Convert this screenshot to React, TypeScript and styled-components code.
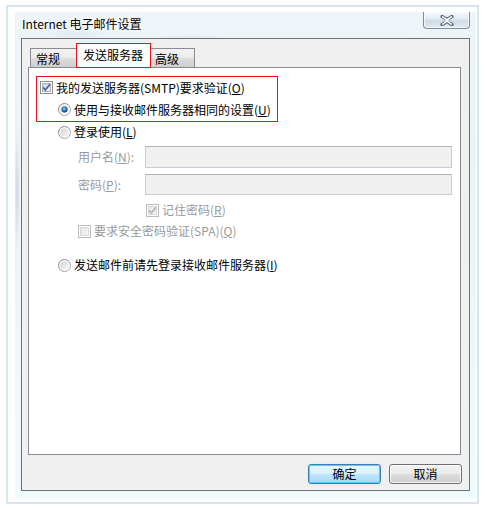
import React from "react";
import styled, { createGlobalStyle } from "styled-components";

const Global = createGlobalStyle`
  html, body { margin: 0; padding: 0; background: #ffffff; }
  body { font-family: "Noto Sans CJK SC", "Noto Sans", sans-serif; font-size: 12px; color: #000; }
  * { box-sizing: border-box; }
`;

const Frame = styled.div`
  margin: 5px 0 0 6px;
  width: 473px;
  height: 499px;
  border: 2px solid #d7e5ef;
  background: #fdfefe;
  padding: 5px 1px 4px 7px;
  display: flex;
`;

const Win = styled.div`
  width: 461px;
  height: 486px;
  display: flex;
  flex-direction: column;
  padding: 0 6px 7px 6px;
  background:
    radial-gradient(ellipse 60px 10px at 175px 32px, rgba(150,165,175,0.35), transparent),
    radial-gradient(ellipse 50px 10px at 400px 34px, rgba(120,135,150,0.35), transparent),
    radial-gradient(ellipse 40px 8px at 60px 22px, rgba(200,215,225,0.35), transparent),
    radial-gradient(ellipse 3px 60px at 2px 180px, rgba(130,145,160,0.3), transparent),
    linear-gradient(180deg, #eef5f9 0%, #e9f4f8 30%, #eefafc 100%);
`;

const TitleBar = styled.div`
  height: 26px;
  display: flex;
  justify-content: space-between;
  align-items: flex-start;
`;

const Title = styled.div`
  padding: 5px 0 0 1px;
  font-size: 12px;
  line-height: 14px;
  color: #000;
  text-shadow: 0 0 6px #ffffff, 0 0 3px #ffffff;
`;

const CloseBtn = styled.div`
  width: 47px;
  height: 17px;
  border: 1px solid #7d8c99;
  border-top: none;
  border-radius: 0 0 4px 4px;
  background: linear-gradient(180deg, #f4f8fb 0%, #e3ecf3 45%, #cfdce6 50%, #dfe9f0 100%);
  box-shadow: inset 0 0 0 1px rgba(255,255,255,0.7);
  display: flex;
  align-items: center;
  justify-content: center;
`;

const Client = styled.div`
  flex: 1;
  border: 1px solid #6f7378;
  background: #f0f0f0;
  display: flex;
  flex-direction: column;
  padding: 4px 8px 6px 6px;
`;

const TabStrip = styled.div`
  height: 24px;
  display: flex;
  align-items: flex-end;
  padding-left: 2px;
`;

const Tab = styled.div<{ $w: number; $active?: boolean; $pl: number; $noLeft?: boolean; $noRight?: boolean }>`
  width: ${(p) => p.$w}px;
  height: ${(p) => (p.$active ? 25 : 19)}px;
  margin-bottom: ${(p) => (p.$active ? -1 : 0)}px;
  position: relative;
  z-index: ${(p) => (p.$active ? 2 : 1)};
  padding-left: ${(p) => p.$pl}px;
  display: flex;
  align-items: center;
  font-size: 12px;
  line-height: 14px;
  border: 1px solid ${(p) => (p.$active ? "#e8141b" : "#898c95")};
  border-bottom: ${(p) => (p.$active ? "1px solid #e8141b" : "none")};
  ${(p) => (p.$noLeft ? "border-left: none;" : "")}
  ${(p) => (p.$noRight ? "border-right: none;" : "")}
  padding-top: ${(p) => (p.$active ? 0 : 2)}px;
  padding-bottom: ${(p) => (p.$active ? 2 : 0)}px;
  background: ${(p) =>
    p.$active ? "#ffffff" : "linear-gradient(180deg, #f2f2f2 0%, #ebebeb 50%, #dddddd 51%, #cfcfcf 100%)"};
`;

const Panel = styled.div`
  flex: 1;
  background: #ffffff;
  border: 1px solid #898c95;
  padding: 8px 8px 0 7px;
  display: flex;
  flex-direction: column;
`;

const RedBox = styled.div`
  width: 242px;
  border: 1px solid #e8141b;
  display: flex;
  flex-direction: column;
`;

const Row = styled.div<{ $h: number; $mt?: number; $pl: number; $gray?: boolean }>`
  height: ${(p) => p.$h}px;
  margin-top: ${(p) => p.$mt ?? 0}px;
  padding-left: ${(p) => p.$pl}px;
  display: flex;
  align-items: center;
  gap: 3px;
  font-size: 12px;
  line-height: 14px;
  white-space: nowrap;
  color: ${(p) => (p.$gray ? "#9a9a9a" : "#000")};
`;

const Label = styled.span`
  width: 64px;
  flex: none;
`;

const Input = styled.div<{ $h: number }>`
  flex: 1;
  height: ${(p) => p.$h}px;
  background: #f0f0f0;
  border: 1px solid #c5cdd6;
  border-top-color: #abb3bc;
`;

const BtnRow = styled.div`
  display: flex;
  justify-content: flex-end;
  gap: 8px;
  margin-top: 9px;
  margin-right: -1px;
  height: 20px;
`;

const Btn = styled.div<{ $def?: boolean }>`
  width: 73px;
  height: 20px;
  border-radius: 3px;
  border: 1px solid ${(p) => (p.$def ? "#3c7fb1" : "#707070")};
  background: ${(p) =>
    p.$def
      ? "linear-gradient(180deg, #eaf6fd 0%, #d9f0fc 50%, #bee6fd 51%, #a7d9f5 100%)"
      : "linear-gradient(180deg, #f2f2f2 0%, #ebebeb 50%, #dddddd 51%, #cfcfcf 100%)"};
  box-shadow: ${(p) =>
    p.$def ? "inset 0 0 0 1px #48d3fb, 0 0 1px #7fd6f5" : "inset 0 0 0 1px rgba(255,255,255,0.8)"};
  display: flex;
  align-items: center;
  justify-content: center;
  font-size: 12px;
  line-height: 14px;
  color: #000;
`;

const CheckBox = ({ checked, disabled }: { checked?: boolean; disabled?: boolean }) => (
  <svg width="13" height="13" viewBox="0 0 13 13" style={{ flex: "none" }}>
    <defs>
      <linearGradient id={`cbg${disabled ? "d" : "n"}`} x1="0" y1="0" x2="1" y2="1">
        <stop offset="0" stopColor={disabled ? "#e6e6e6" : "#cbcfd5"} />
        <stop offset="1" stopColor={disabled ? "#f7f7f7" : "#f6f6f6"} />
      </linearGradient>
    </defs>
    <rect x="0.5" y="0.5" width="12" height="12" fill="#fff" stroke={disabled ? "#bcbcbc" : "#8e8f8f"} />
    <rect x="2.5" y="2.5" width="8" height="8" fill={`url(#cbg${disabled ? "d" : "n"})`} stroke={disabled ? "#d8d8d8" : "#aeb3b9"} />
    {checked && (
      <path
        d="M3 6.4 L5.3 9 L10 3.2"
        fill="none"
        stroke={disabled ? "#b4b4b4" : "#4a5f97"}
        strokeWidth="1.7"
        strokeLinejoin="round"
      />
    )}
  </svg>
);

const Radio = ({ checked }: { checked?: boolean }) => (
  <svg width="13" height="13" viewBox="0 0 13 13" style={{ flex: "none" }}>
    <defs>
      <linearGradient id="rbo" x1="0" y1="0" x2="1" y2="1">
        <stop offset="0" stopColor="#7b7b7b" />
        <stop offset="1" stopColor="#b4b4b4" />
      </linearGradient>
      <linearGradient id="rbi" x1="0" y1="0" x2="1" y2="1">
        <stop offset="0" stopColor="#cdd0d4" />
        <stop offset="1" stopColor="#f9f9f9" />
      </linearGradient>
      <radialGradient id="rdot" cx="0.45" cy="0.4" r="0.6">
        <stop offset="0" stopColor="#9ee2fb" />
        <stop offset="0.5" stopColor="#2b7fb8" />
        <stop offset="1" stopColor="#0e3b66" />
      </radialGradient>
    </defs>
    <circle cx="6.5" cy="6.5" r="6" fill="#fdfdfd" stroke="url(#rbo)" />
    <circle cx="6.5" cy="6.5" r="4.3" fill="url(#rbi)" />
    {checked && <circle cx="6.5" cy="6.5" r="3" fill="url(#rdot)" />}
  </svg>
);

export default function App() {
  return (
    <>
      <Global />
      <Frame>
        <Win>
          <TitleBar>
            <Title>Internet 电子邮件设置</Title>
            <CloseBtn>
              <svg width="14" height="11" viewBox="0 0 14 11">
                <path
                  d="M2 1.5 L7 4.3 L12 1.5 M2 9.5 L7 6.7 L12 9.5"
                  fill="none"
                  stroke="#5b6570"
                  strokeWidth="3.2"
                  strokeLinecap="round"
                />
                <path
                  d="M2.5 1.8 L7 4.6 L11.5 1.8 M2.5 9.2 L7 6.4 L11.5 9.2 M3 2 L11 9 M11 2 L3 9"
                  fill="none"
                  stroke="#ffffff"
                  strokeWidth="1.4"
                  strokeLinecap="round"
                />
              </svg>
            </CloseBtn>
          </TitleBar>
          <Client>
            <TabStrip>
              <Tab $w={46} $pl={5} $noRight>常规</Tab>
              <Tab $w={75} $pl={6} $active>发送服务器</Tab>
              <Tab $w={44} $pl={4} $noLeft>高级</Tab>
            </TabStrip>
            <Panel>
              <RedBox>
                <Row $h={21} $pl={3}>
                  <CheckBox checked />
                  <span>我的发送服务器(SMTP)要求验证(<u>O</u>)</span>
                </Row>
                <Row $h={23} $pl={21}>
                  <Radio checked />
                  <span>使用与接收邮件服务器相同的设置(<u>U</u>)</span>
                </Row>
              </RedBox>
              <Row $h={20} $pl={22}>
                <Radio />
                <span>登录使用(<u>L</u>)</span>
              </Row>
              <Row $h={22} $mt={4} $pl={42} $gray>
                <Label>用户名(<u>N</u>):</Label>
                <Input $h={22} />
              </Row>
              <Row $h={21} $mt={6} $pl={42} $gray>
                <Label>密码(<u>P</u>):</Label>
                <Input $h={21} />
              </Row>
              <Row $h={20} $mt={5} $pl={110} $gray>
                <CheckBox checked disabled />
                <span>记住密码(<u>R</u>)</span>
              </Row>
              <Row $h={20} $mt={1} $pl={42} $gray>
                <CheckBox disabled />
                <span>要求安全密码验证(SPA)(<u>Q</u>)</span>
              </Row>
              <Row $h={20} $mt={14} $pl={22}>
                <Radio />
                <span>发送邮件前请先登录接收邮件服务器(<u>I</u>)</span>
              </Row>
            </Panel>
            <BtnRow>
              <Btn $def>确定</Btn>
              <Btn>取消</Btn>
            </BtnRow>
          </Client>
        </Win>
      </Frame>
    </>
  );
}
